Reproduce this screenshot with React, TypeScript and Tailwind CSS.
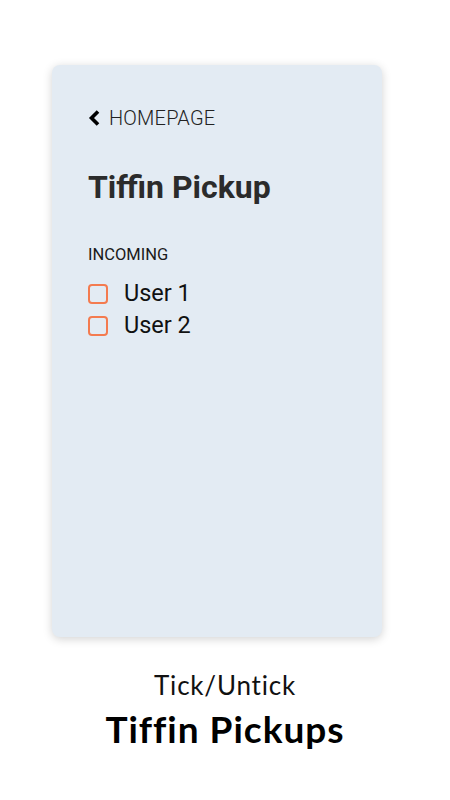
import React from 'react';

const users = ['User 1', 'User 2'];

const App: React.FC = () => {
  return (
    <div className="w-[450px] h-[800px] bg-white flex flex-col items-center font-['Roboto',sans-serif]">
      <div className="mt-[65px] self-start ml-[52px] w-[330px] h-[572px] rounded-lg bg-[#e3ebf3] shadow-[0_2px_10px_rgba(0,0,0,0.18)] px-9 pt-[43px]">
        <div className="flex items-center gap-[8px] text-[#222]">
          <svg width="13" height="18" viewBox="0 0 13 18">
            <path d="M10 2.5 L3.5 9 L10 15.5" fill="none" stroke="#000" strokeWidth="3.6" />
          </svg>
          <span className="text-[20px] font-light leading-none tracking-[0.2px]">HOMEPAGE</span>
        </div>
        <h1 className="mt-[43px] text-[32px] font-bold leading-none text-[#2b2b2b]">Tiffin Pickup</h1>
        <div className="mt-[44px] text-[16.5px] font-normal leading-none text-[#1a1a1a]">INCOMING</div>
        <div className="mt-[14px] flex flex-col">
          {users.map(u => (
            <label key={u} className="flex items-center gap-[16px] h-[32px]">
              <span className="w-5 h-5 rounded-[4px] border-2 border-[#f47b4f]" />
              <span className="text-[23.5px] leading-none text-[#111]">{u}</span>
            </label>
          ))}
        </div>
      </div>
      <div className="mt-[35px] text-[26px] leading-none text-[#111] font-['Lato',sans-serif] tracking-[0.8px]">Tick/Untick</div>
      <div className="mt-[12px] text-[37px] font-bold leading-none text-black font-['Lato',sans-serif] tracking-[1px]">Tiffin Pickups</div>
    </div>
  );
};

export default App;
